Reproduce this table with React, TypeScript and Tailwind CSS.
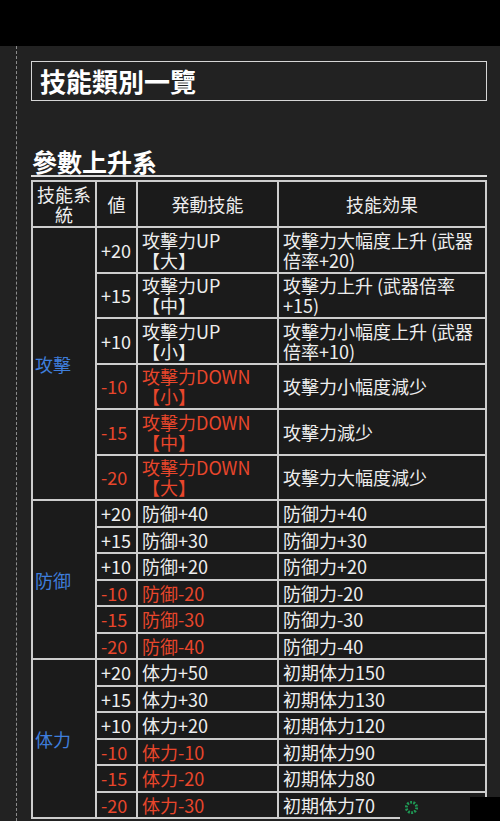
import React from 'react';

type Item = {
  value: string;
  skill: string[];
  effect: string[];
};

type Group = {
  name: string;
  tall: boolean;
  items: Item[];
};

const groups: Group[] = [
  {
    name: '攻擊',
    tall: true,
    items: [
      { value: '+20', skill: ['攻擊力UP', '【大】'], effect: ['攻擊力大幅度上升 (武器', '倍率+20)'] },
      { value: '+15', skill: ['攻擊力UP', '【中】'], effect: ['攻擊力上升 (武器倍率', '+15)'] },
      { value: '+10', skill: ['攻擊力UP', '【小】'], effect: ['攻擊力小幅度上升 (武器', '倍率+10)'] },
      { value: '-10', skill: ['攻擊力DOWN', '【小】'], effect: ['攻擊力小幅度減少'] },
      { value: '-15', skill: ['攻擊力DOWN', '【中】'], effect: ['攻擊力減少'] },
      { value: '-20', skill: ['攻擊力DOWN', '【大】'], effect: ['攻擊力大幅度減少'] },
    ],
  },
  {
    name: '防御',
    tall: false,
    items: [
      { value: '+20', skill: ['防御+40'], effect: ['防御力+40'] },
      { value: '+15', skill: ['防御+30'], effect: ['防御力+30'] },
      { value: '+10', skill: ['防御+20'], effect: ['防御力+20'] },
      { value: '-10', skill: ['防御-20'], effect: ['防御力-20'] },
      { value: '-15', skill: ['防御-30'], effect: ['防御力-30'] },
      { value: '-20', skill: ['防御-40'], effect: ['防御力-40'] },
    ],
  },
  {
    name: '体力',
    tall: false,
    items: [
      { value: '+20', skill: ['体力+50'], effect: ['初期体力150'] },
      { value: '+15', skill: ['体力+30'], effect: ['初期体力130'] },
      { value: '+10', skill: ['体力+20'], effect: ['初期体力120'] },
      { value: '-10', skill: ['体力-10'], effect: ['初期体力90'] },
      { value: '-15', skill: ['体力-20'], effect: ['初期体力80'] },
      { value: '-20', skill: ['体力-30'], effect: ['初期体力70'] },
    ],
  },
];

const Lines = ({ lines }: { lines: string[] }) => (
  <>
    {lines.map((l, i) => (
      <React.Fragment key={i}>
        {i > 0 && <br />}
        {l}
      </React.Fragment>
    ))}
  </>
);

export default function App() {
  return (
    <div
      className="relative min-h-[821px] overflow-hidden bg-[#222222] text-[#eeeeee]"
      style={{ fontFamily: '"Noto Sans CJK TC", "Noto Sans CJK JP", "Noto Sans", sans-serif' }}
    >
      <div className="h-[46px] bg-black" />
      <div className="flex">
        <div className="w-[16px] shrink-0" />
        <div className="min-h-[775px] border-l border-dashed border-[#8c8c8c] pl-[14px]">
          {/* page title */}
          <div className="mt-[15px] flex h-[40px] w-[456px] items-center border border-[#d6d6d6] pl-[8px] text-[26px] font-bold leading-none text-white">
            技能類別一覽
          </div>

          <h2 className="mt-[46px] w-[456px] border-b-2 border-[#dcdcdc] pl-[1px] text-[25px] font-bold leading-[28px] text-white">
            參數上升系
          </h2>

          <table className="mt-[3px] w-[456px] table-fixed border-separate border-spacing-[2px] bg-[#cdcdcd] text-[18px] leading-[20px]">
            <colgroup>
              <col className="w-[62px]" />
              <col className="w-[39px]" />
              <col className="w-[139px]" />
              <col className="w-[206px]" />
            </colgroup>
            <thead>
              <tr>
                <th className="h-[44px] bg-[#1b1b1b] p-0 text-center font-normal">
                  技能系
                  <br />
                  統
                </th>
                <th className="bg-[#1b1b1b] p-0 text-center font-normal">値</th>
                <th className="bg-[#1b1b1b] p-0 text-center font-normal">発動技能</th>
                <th className="bg-[#1b1b1b] p-0 text-center font-normal">技能効果</th>
              </tr>
            </thead>
            <tbody>
              {groups.map((g) =>
                g.items.map((it, i) => {
                  const neg = it.value.startsWith('-');
                  const h = g.tall ? 'h-[43.5px]' : 'h-[24.5px]';
                  return (
                    <tr key={g.name + i}>
                      {i === 0 && (
                        <td rowSpan={g.items.length} className="bg-[#1b1b1b] p-0 pl-[2px] align-middle text-[#3f7edb]">
                          {g.name}
                        </td>
                      )}
                      <td className={`${h} bg-[#1b1b1b] p-0 pl-[4px] align-middle ${neg ? 'text-[#e8462b]' : ''}`}>
                        {it.value}
                      </td>
                      <td className={`bg-[#1b1b1b] p-0 pl-[4px] align-middle ${neg ? 'text-[#e8462b]' : ''}`}>
                        <Lines lines={it.skill} />
                      </td>
                      <td className="bg-[#1b1b1b] p-0 pl-[4px] align-middle">
                        <Lines lines={it.effect} />
                      </td>
                    </tr>
                  );
                })
              )}
            </tbody>
          </table>
        </div>
      </div>

      {/* watermark in the corner */}
      <div className="absolute left-[400px] top-[797px] flex h-[24px] w-[100px]">
        <div className="flex w-[70px] items-start bg-[#1c1c1c] pl-[4px] pt-[3px]">
          <svg width="15" height="15" viewBox="0 0 16 16">
            <circle cx="8" cy="8" r="5.5" fill="none" stroke="#1f9a55" strokeWidth="3" strokeDasharray="2 1.4" />
          </svg>
        </div>
        <div className="w-[30px] bg-black" />
      </div>
    </div>
  );
}
